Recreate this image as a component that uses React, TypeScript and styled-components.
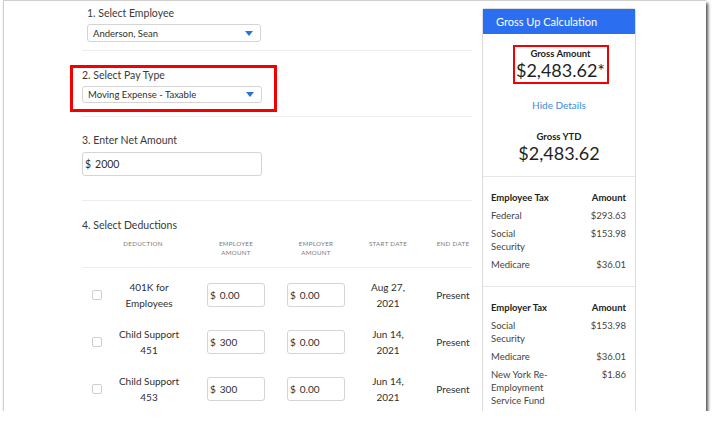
import React from "react";
import styled, { createGlobalStyle } from "styled-components";

const GlobalStyle = createGlobalStyle`
  html, body {
    margin: 0;
    padding: 0;
    background: #fff;
  }
  body {
    font-family: Lato, "Liberation Sans", Arial, sans-serif;
    color: #333;
  }
  * {
    box-sizing: border-box;
  }
`;

const Frame = styled.div`
  margin-left: 3px;
  width: 703px;
  height: 411px;
  border-top: 1px solid #cfcfcf;
  border-left: 1px solid #cfcfcf;
  background: #fff;
  box-shadow: 2px 3px 3px rgba(0, 0, 0, 0.7);
  overflow: hidden;
  display: flex;
  align-items: flex-start;
  padding-left: 78px;
`;

const LeftColumn = styled.div`
  width: 390px;
  flex-shrink: 0;
`;

const Step = styled.section<{ $pt: number; $pb: number; $indent?: number; $plain?: boolean }>`
  padding: ${(p) => p.$pt}px 0 ${(p) => p.$pb}px ${(p) => p.$indent || 0}px;
  border-bottom: ${(p) => (p.$plain ? "none" : "1px solid #ededed")};
`;

const StepLabel = styled.div`
  font-size: 10.5px;
  line-height: 14px;
  color: #3a3a3a;
`;

const Highlight = styled.div`
  margin-left: -12px;
  width: 207px;
  border: 3px solid #f40000;
  padding: 0 12px 6px 9px;
`;

const SelectBox = styled.div<{ $w: number; $h: number }>`
  margin-top: 4px;
  width: ${(p) => p.$w}px;
  height: ${(p) => p.$h}px;
  border: 1px solid #d4d4d4;
  border-radius: 3px;
  display: flex;
  align-items: center;
  justify-content: space-between;
  padding: 0 7px 0 5px;
  font-size: 9.5px;
  color: #2f2f2f;
`;

const TextInput = styled.div<{ $w: number; $h: number; $mt?: number; $size?: number }>`
  margin-top: ${(p) => p.$mt || 0}px;
  width: ${(p) => p.$w}px;
  height: ${(p) => p.$h}px;
  border: 1px solid #d4d4d4;
  border-radius: 3px;
  display: flex;
  align-items: center;
  padding-left: 2px;
  font-size: ${(p) => p.$size || 10}px;
  color: #2f2f2f;
  gap: 4px;
`;

const tableColumns = "28px 86px 80px 80px 64px 51px";

const HeaderRow = styled.div`
  margin-top: 7px;
  display: grid;
  grid-template-columns: ${tableColumns};
  align-items: start;
  padding-bottom: 10px;
  border-bottom: 1px solid #ededed;
`;

const HeaderCell = styled.div<{ $padL?: number; $padR?: number }>`
  padding-left: ${(p) => p.$padL || 0}px;
  padding-right: ${(p) => p.$padR || 0}px;
  text-align: center;
  font-size: 6.2px;
  line-height: 9px;
  letter-spacing: 0.3px;
  text-transform: uppercase;
  color: #7a7a7a;
`;

const Rows = styled.div`
  padding-top: 3px;
`;

const Row = styled.div`
  display: grid;
  grid-template-columns: ${tableColumns};
  align-items: center;
  height: 47px;
`;

const Cell = styled.div<{ $padL?: number; $padR?: number }>`
  padding-left: ${(p) => p.$padL || 0}px;
  padding-right: ${(p) => p.$padR || 0}px;
  display: flex;
  justify-content: center;
  text-align: center;
  font-size: 10px;
  line-height: 16px;
  color: #2f2f2f;
`;

const Checkbox = styled.div`
  margin-left: 10px;
  width: 10px;
  height: 10px;
  border: 1px solid #cfcfcf;
  border-radius: 2px;
`;

const Panel = styled.aside`
  width: 154px;
  flex-shrink: 0;
  margin: 7px 0 0 10px;
  border: 1px solid #dcdcdc;
  border-radius: 3px 3px 0 0;
`;

const PanelHeader = styled.div`
  height: 25px;
  background: #2b6ef0;
  color: #fff;
  font-size: 11px;
  padding-left: 13px;
  display: flex;
  align-items: center;
`;

const Summary = styled.div`
  display: flex;
  flex-direction: column;
  align-items: center;
  padding: 11px 0 12px;
  border-bottom: 1px solid #e6e6e6;
`;

const GrossBox = styled.div`
  width: 96px;
  border: 2px solid #f40000;
  padding: 1px 0;
  text-align: center;
  margin-left: 3px;
`;

const SmallTitle = styled.div<{ $mt?: number }>`
  margin-top: ${(p) => p.$mt || 0}px;
  font-size: 9.5px;
  font-weight: 700;
  line-height: 11px;
  color: #222;
`;

const BigAmount = styled.div`
  font-size: 18px;
  line-height: 22px;
  color: #1f1f1f;
`;

const HideLink = styled.a`
  margin-top: 15px;
  font-size: 10px;
  line-height: 12px;
  color: #3d8bd7;
  text-decoration: none;
`;

const TaxSection = styled.div`
  display: grid;
  grid-template-columns: 60px 1fr;
  row-gap: 5px;
  padding: 14px 9px 15px 8px;
  border-bottom: 1px solid #e6e6e6;
  font-size: 9.5px;
  line-height: 13px;
  color: #444;
`;

const TaxHead = styled.div<{ $right?: boolean }>`
  font-weight: 700;
  color: #222;
  text-align: ${(p) => (p.$right ? "right" : "left")};
  white-space: nowrap;
`;

const TaxAmount = styled.div`
  text-align: right;
`;

const Caret = () => (
  <svg width="8" height="5" viewBox="0 0 8 5">
    <polygon points="0,0 8,0 4,5" fill="#2574d8" />
  </svg>
);

type Deduction = {
  name: string;
  employee: string;
  employer: string;
  startDay: string;
  startYear: string;
};

const deductions: Deduction[] = [
  { name: "401K for Employees", employee: "0.00", employer: "0.00", startDay: "Aug 27,", startYear: "2021" },
  { name: "Child Support 451", employee: "300", employer: "0.00", startDay: "Jun 14,", startYear: "2021" },
  { name: "Child Support 453", employee: "300", employer: "0.00", startDay: "Jun 14,", startYear: "2021" },
];

const employeeTaxes = [
  ["Federal", "$293.63"],
  ["Social Security", "$153.98"],
  ["Medicare", "$36.01"],
];

const employerTaxes = [
  ["Social Security", "$153.98"],
  ["Medicare", "$36.01"],
  ["New York Re-Employment Service Fund", "$1.86"],
];

const App: React.FC = () => {
  return (
    <>
      <GlobalStyle />
      <Frame>
        <LeftColumn>
          <Step $pt={5} $pb={8} $indent={5}>
            <StepLabel>1. Select Employee</StepLabel>
            <SelectBox $w={174} $h={18}>
              <span>Anderson, Sean</span>
              <Caret />
            </SelectBox>
          </Step>
          <Step $pt={14} $pb={4}>
            <Highlight>
              <StepLabel>2. Select Pay Type</StepLabel>
              <SelectBox $w={180} $h={17}>
                <span>Moving Expense - Taxable</span>
                <Caret />
              </SelectBox>
            </Highlight>
          </Step>
          <Step $pt={16} $pb={24}>
            <StepLabel>3. Enter Net Amount</StepLabel>
            <TextInput $w={180} $h={24} $mt={5} $size={10.5}>
              <span>$</span>
              <span>2000</span>
            </TextInput>
          </Step>
          <Step $pt={17} $pb={0} $plain>
            <StepLabel>4. Select Deductions</StepLabel>
            <HeaderRow>
              <HeaderCell />
              <HeaderCell $padR={20}>Deduction</HeaderCell>
              <HeaderCell>
                Employee
                <br />
                Amount
              </HeaderCell>
              <HeaderCell>
                Employer
                <br />
                Amount
              </HeaderCell>
              <HeaderCell>Start Date</HeaderCell>
              <HeaderCell $padL={15}>End Date</HeaderCell>
            </HeaderRow>
            <Rows>
              {deductions.map((d) => (
                <Row key={d.name}>
                  <Checkbox />
                  <Cell $padL={4} $padR={12}>{d.name}</Cell>
                  <Cell>
                    <TextInput $w={58} $h={24}>
                      <span>$</span>
                      <span>{d.employee}</span>
                    </TextInput>
                  </Cell>
                  <Cell>
                    <TextInput $w={58} $h={24}>
                      <span>$</span>
                      <span>{d.employer}</span>
                    </TextInput>
                  </Cell>
                  <Cell>
                    {d.startDay}
                    <br />
                    {d.startYear}
                  </Cell>
                  <Cell $padL={15}>Present</Cell>
                </Row>
              ))}
            </Rows>
          </Step>
        </LeftColumn>
        <Panel>
          <PanelHeader>Gross Up Calculation</PanelHeader>
          <Summary>
            <GrossBox>
              <SmallTitle>Gross Amount</SmallTitle>
              <BigAmount>$2,483.62*</BigAmount>
            </GrossBox>
            <HideLink>Hide Details</HideLink>
            <SmallTitle $mt={20}>Gross YTD</SmallTitle>
            <BigAmount>$2,483.62</BigAmount>
          </Summary>
          <TaxSection>
            <TaxHead>Employee Tax</TaxHead>
            <TaxHead $right>Amount</TaxHead>
            {employeeTaxes.map(([label, amount]) => (
              <React.Fragment key={label}>
                <div>{label}</div>
                <TaxAmount>{amount}</TaxAmount>
              </React.Fragment>
            ))}
          </TaxSection>
          <TaxSection>
            <TaxHead>Employer Tax</TaxHead>
            <TaxHead $right>Amount</TaxHead>
            {employerTaxes.map(([label, amount]) => (
              <React.Fragment key={label}>
                <div>{label}</div>
                <TaxAmount>{amount}</TaxAmount>
              </React.Fragment>
            ))}
          </TaxSection>
        </Panel>
      </Frame>
    </>
  );
};

export default App;
